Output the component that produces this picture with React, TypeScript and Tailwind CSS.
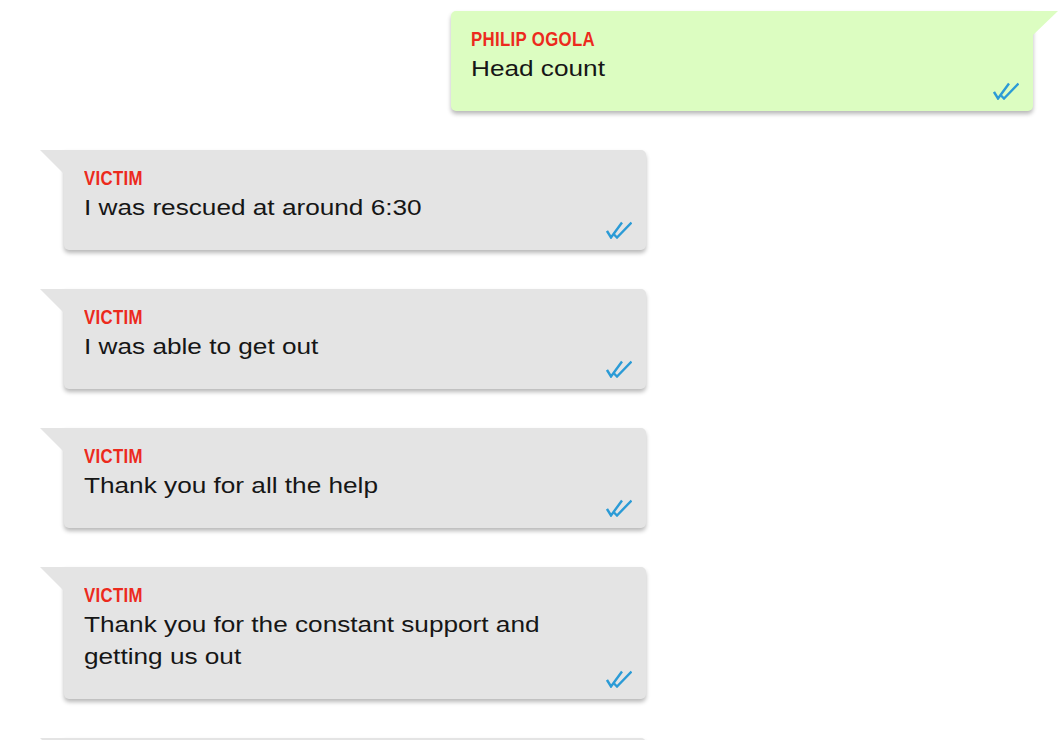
const messages = [
  { from: 'PHILIP OGOLA', text: 'Head count', mine: true },
  { from: 'VICTIM', text: 'I was rescued at around 6:30', mine: false },
  { from: 'VICTIM', text: 'I was able to get out', mine: false },
  { from: 'VICTIM', text: 'Thank you for all the help', mine: false },
  { from: 'VICTIM', text: 'Thank you for the constant support and getting us out', mine: false },
];

const DoubleCheck = () => (
  <svg width="26" height="18" viewBox="0 0 26 18" fill="none" stroke="#2b9bd6" strokeWidth="2.4" strokeLinecap="butt">
    <path d="M1 10 L5 16.5 L16 1.5" />
    <path d="M8 13.5 L11 16.5 L25.5 1.5" />
  </svg>
);

const Tail = ({ mine }: { mine: boolean }) =>
  mine ? (
    <div className="absolute top-0 right-[-25px] w-[25px] h-[24px] bg-[#dcfdc1] [clip-path:polygon(0_0,100%_0,0_100%)]" />
  ) : (
    <div className="absolute top-0 left-[-24px] w-[24px] h-[24px] bg-[#e4e4e4] [clip-path:polygon(0_0,100%_0,100%_100%)]" />
  );

const Bubble = ({ from, text, mine }: { from: string; text: string; mine: boolean }) => (
  <div
    className={`relative w-[582px] pt-[15px] pb-[11px] pl-5 pr-5 shadow-[0_3px_4px_rgba(0,0,0,0.28)] ${
      mine ? 'bg-[#dcfdc1] rounded-[5px] rounded-tr-none' : 'bg-[#e4e4e4] rounded-[5px] rounded-tl-none'
    }`}
  >
    <Tail mine={mine} />
    <div className="h-[27px] font-['Liberation_Sans',Arial,sans-serif] font-bold text-[21px] leading-[26px] text-[#ec2a1d] tracking-[0.4px] whitespace-nowrap">
      <span className="inline-block origin-left scale-x-[0.8]">{from}</span>
    </div>
    <div className="w-[440px] origin-left scale-x-[1.19] font-['Liberation_Sans',Arial,sans-serif] text-[22px] leading-[32px] text-[#161616]">
      {text}
    </div>
    <div className="flex justify-end mt-[-3px] mr-[-6px]">
      <DoubleCheck />
    </div>
  </div>
);

export default function App() {
  return (
    <div className="w-[1058px] h-[740px] overflow-hidden bg-white">
      <div className="flex flex-col gap-[39px] pt-[11px]">
        {messages.map((m, i) => (
          <div key={i} className={m.mine ? 'flex justify-end pr-[25px]' : 'flex pl-[64px]'}>
            <Bubble {...m} />
          </div>
        ))}
        {/* next message, only its top edge is on screen */}
        <div className="flex pl-[64px]">
          <div className="relative w-[582px] h-[100px] bg-[#e4e4e4] rounded-[5px] rounded-tl-none shadow-[0_3px_4px_rgba(0,0,0,0.28)]">
            <Tail mine={false} />
          </div>
        </div>
      </div>
    </div>
  );
}
